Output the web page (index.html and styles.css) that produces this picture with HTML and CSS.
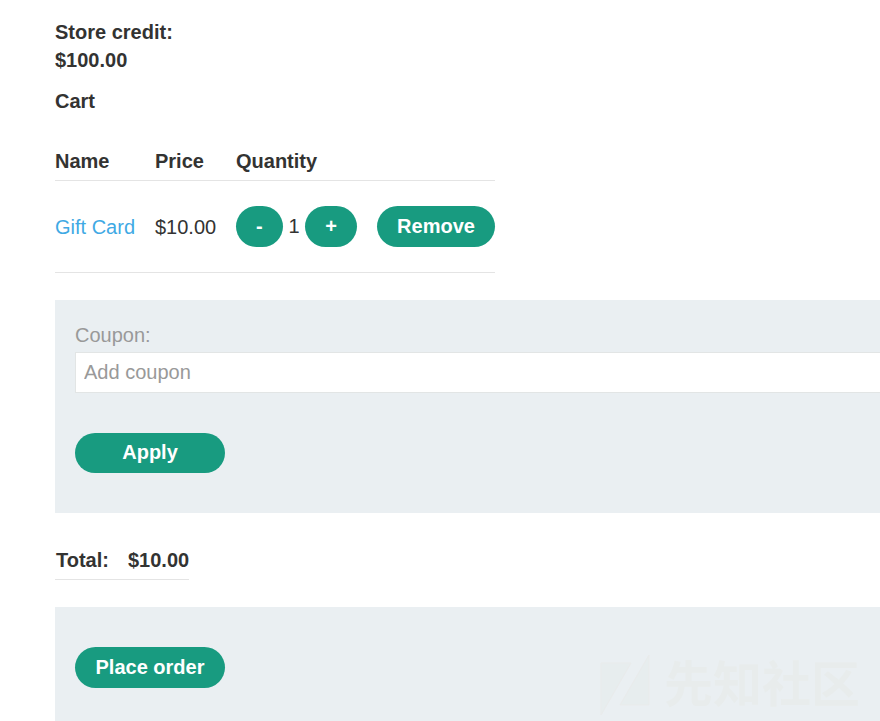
FILE: index.html
```html
<!DOCTYPE html>
<html lang="en">
<head>
<meta charset="utf-8">
<title>Cart</title>
<link rel="stylesheet" href="styles.css">
</head>
<body>
<main class="page">
  <div class="credit">Store credit:<br>$100.00</div>
  <h1 class="title">Cart</h1>
  <div class="cart">
    <div class="cart-head"><span>Name</span><span>Price</span><span>Quantity</span></div>
    <div class="cart-row">
      <a class="link">Gift Card</a>
      <span>$10.00</span>
      <div class="quantity">
        <button class="button">-</button><span class="count">1</span><button class="button">+</button>
      </div>
      <button class="button">Remove</button>
    </div>
  </div>
  <form class="panel coupon">
    <label class="label" for="coupon">Coupon:</label>
    <input class="input" id="coupon" type="text" placeholder="Add coupon">
    <button class="button wide apply" type="button">Apply</button>
  </form>
  <div class="total"><span>Total:</span><span>$10.00</span></div>
  <form class="panel order">
    <button class="button wide" type="button">Place order</button>
  </form>
</main>
<div class="watermark">
  <svg class="mark" width="50" height="62" viewBox="0 0 50 62"><path d="M1 9H31L1 61ZM49 1V51H20Z"/></svg>
  <span>先知社区</span>
</div>
</body>
</html>
```
FILE: styles.css
```css
* { box-sizing: border-box; }

body {
  margin: 0;
  height: 721px;
  overflow: hidden;
  background: #fff;
  color: #333332;
  font: 20px/28px "Liberation Sans", "Noto Sans CJK SC", sans-serif;
}

.page { padding: 18px 0 0 55px; }

.credit, .title, .cart-head, .total { font-weight: 700; }

.title {
  margin: 13px 0 32px;
  font-size: 20px;
}

.cart { width: 440px; }

.cart-head, .cart-row {
  display: grid;
  grid-template-columns: 80px 61px 121px 118px;
  column-gap: 20px;
  align-items: center;
  border-bottom: 1px solid #e4e4e4;
}

.cart-head { height: 34px; padding-bottom: 6px; }
.cart-row { height: 92px; }

.link { color: #3fa9e4; white-space: nowrap; }

.quantity {
  display: flex;
  align-items: center;
  justify-content: space-between;
}

.count { padding-bottom: 2px; }

.button {
  height: 41px;
  padding: 0 20px 1px;
  border: 0;
  border-radius: 20.5px;
  background: #189b80;
  color: #fff;
  font: 700 20px/40px "Liberation Sans", sans-serif;
  white-space: nowrap;
}

.panel {
  background: #eaeff2;
  padding: 0 20px;
}

.coupon {
  display: flex;
  flex-direction: column;
  align-items: flex-start;
  height: 213px;
  margin-top: 27px;
  padding: 21px 0 0 20px;
}

.label { color: #999; }

.input {
  width: 100%;
  height: 41px;
  margin-top: 3px;
  padding: 0 8px 1px;
  border: 1px solid #e2e5e5;
  border-right: 0;
  border-radius: 0;
  background: #fff;
  font: inherit;
}

.input::placeholder { color: #999; opacity: 1; }

.wide { width: 150px; }
.apply { height: 40px; margin-top: 40px; padding-bottom: 2px; line-height: 38px; }

.total {
  display: flex;
  gap: 19px;
  width: 134px;
  height: 34px;
  margin-top: 33px;
  padding-left: 1px;
  border-bottom: 1px solid #e4e4e4;
}

.order {
  height: 114px;
  margin-top: 27px;
  padding-top: 40px;
}

.watermark {
  position: absolute;
  left: 600px;
  top: 654px;
  display: flex;
  gap: 14px;
  color: #e8ecec;
  font-size: 49px;
  font-weight: 700;
  line-height: 62px;
}

.mark { fill: #e7edee; stroke: #e9ebeb; }
```
